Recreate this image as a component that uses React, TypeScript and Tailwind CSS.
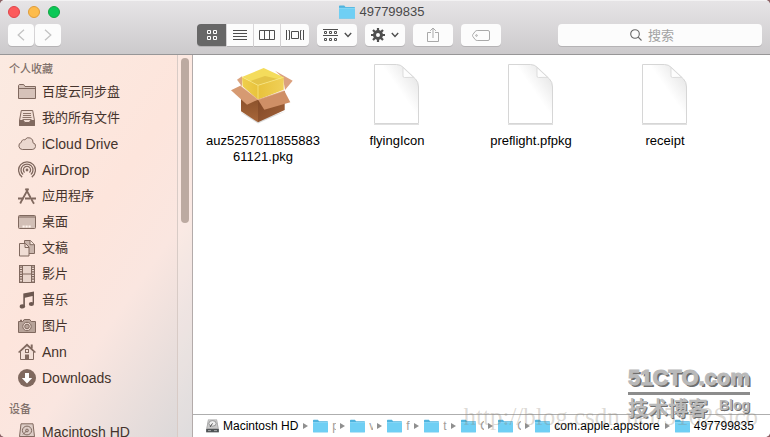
import type { ReactNode } from "react";
import clsx from "clsx";

/* ── Data ──────────────────────────────────────────────────────────────── */

interface Place {
  label: string;
  icon: ReactNode;
}

interface Crumb {
  label: string;
  kind: "disk" | "folder";
  clipped?: boolean;
}

const CRUMBS: Crumb[] = [
  { label: "Macintosh HD", kind: "disk" },
  { label: "p", kind: "folder", clipped: true },
  { label: "v", kind: "folder", clipped: true },
  { label: "f", kind: "folder", clipped: true },
  { label: "t", kind: "folder", clipped: true },
  { label: "C", kind: "folder", clipped: true },
  { label: "C", kind: "folder", clipped: true },
  { label: "com.apple.appstore", kind: "folder" },
  { label: "497799835", kind: "folder" },
];

const FILES = [
  { name: "auz525701185588361121.pkg", kind: "package" },
  { name: "flyingIcon", kind: "document" },
  { name: "preflight.pfpkg", kind: "document" },
  { name: "receipt", kind: "document" },
];

/* ── Sidebar icons ─────────────────────────────────────────────────────── */

function SideIcon({ children }: { children: ReactNode }) {
  return (
    <svg viewBox="0 0 18 18" className="h-[18px] w-[18px] shrink-0" fill="none" stroke="#80695f" strokeWidth="1" aria-hidden="true">
      {children}
    </svg>
  );
}

const FAVORITES: Place[] = [
  {
    label: "百度云同步盘",
    icon: (
      <SideIcon>
        <path d="M.5 15.5v-13l.8-1h4.4l1.3 2h10.5v12z" fill="#d6c2b9" />
        <path d="M.5 5.5h17" />
      </SideIcon>
    ),
  },
  {
    label: "我的所有文件",
    icon: (
      <SideIcon>
        <path d="M3.3 1.5h11.4l1.8 10v5h-15v-5z" fill="#efdcd3" />
        <path d="M1.5 11.5h4l1.2 2h4.6l1.2-2h4v5h-15z" fill="#80695f" />
        <path d="M5 4.5h8M5 6.5h8M4.5 8.5h9M4.5 10.5h9" strokeWidth=".9" />
      </SideIcon>
    ),
  },
  {
    label: "iCloud Drive",
    icon: (
      <SideIcon>
        <path d="M4.3 14.5a3.7 3.7 0 0 1-.9-7.2 2.6 2.6 0 0 1 3.5-2.5 4.4 4.4 0 0 1 8.1 3 3.4 3.4 0 0 1-.8 6.7z" fill="#ead7ce" />
      </SideIcon>
    ),
  },
  {
    label: "AirDrop",
    icon: (
      <SideIcon>
        <g strokeWidth="1.3">
          <path d="M4.2 16.1a8.4 8.4 0 1 1 9.6 0" />
          <path d="M5.1 13.6a6 6 0 1 1 7.8 0" />
          <path d="M6.6 11.6a3.6 3.6 0 1 1 4.8 0" />
        </g>
        <circle cx="9" cy="9" r="1.4" fill="#80695f" stroke="none" />
      </SideIcon>
    ),
  },
  {
    label: "应用程序",
    icon: (
      <SideIcon>
        <path d="M7.6 1.5l7.2 13.3 1.2 2M10.4 1.5L3.2 14.5l-1 2" strokeWidth="1.8" />
        <path d="M0 11.5h5.5M7 11.5h5M14 11.5h4" strokeWidth="1.8" />
      </SideIcon>
    ),
  },
  {
    label: "桌面",
    icon: (
      <SideIcon>
        <rect x=".5" y="2.5" width="17" height="13" rx="1" fill="#d2bfb6" />
        <path d="M1 4h16" />
        <path d="M4.5 13.5h9" stroke="#fff3ec" strokeWidth="2" strokeDasharray="2.2 .8" />
      </SideIcon>
    ),
  },
  {
    label: "文稿",
    icon: (
      <SideIcon>
        <path d="M6.5 1.5h6l4 4v9h-10z" fill="#c9b5ac" />
        <path d="M12 1.5v4.2h4.5" fill="#f7e6dd" />
        <path d="M1.5 4.5h6l3.5 3.5v9h-9.5z" fill="#f0ddd4" />
        <path d="M7 4.5v4h4" />
      </SideIcon>
    ),
  },
  {
    label: "影片",
    icon: (
      <SideIcon>
        <rect x="1.5" y=".5" width="15" height="17" fill="#e8d5cc" />
        <path d="M4.5 .5v17M13.5 .5v17M4.5 9h9" />
        <path d="M3 1.5v15M15 1.5v15" strokeWidth="2" strokeDasharray="1.2 1.2" />
      </SideIcon>
    ),
  },
  {
    label: "音乐",
    icon: (
      <SideIcon>
        <g fill="#6d5850" stroke="none">
          <path d="M5.3 2.6L16 .4v12.2h-1.4V5.1L6.9 6.8v8.4H5.3z" />
          <ellipse cx="4.4" cy="15.4" rx="2.7" ry="2.1" />
          <ellipse cx="13.4" cy="12.9" rx="2.6" ry="2" />
        </g>
      </SideIcon>
    ),
  },
  {
    label: "图片",
    icon: (
      <SideIcon>
        <path d="M.5 4.5h4.3l1.4-2h5.6l1.4 2h4.3v11H.5z" fill="#b7a399" />
        <circle cx="9" cy="9.5" r="4.2" fill="#efdcd3" />
        <circle cx="9" cy="9.5" r="2.3" fill="#b7a399" />
        <path d="M2 3.5h2" strokeWidth="1.5" />
      </SideIcon>
    ),
  },
  {
    label: "Ann",
    icon: (
      <SideIcon>
        <path d="M2.5 8.5v8h13v-8L9 2.5z" fill="#f3e0d8" />
        <path d="M.6 9.5L9 1.6l8.4 7.9" strokeWidth="1.6" />
        <path d="M13.7 1.5v4" strokeWidth="2" />
        <rect x="7.5" y="6.5" width="3" height="3" />
        <path d="M7 17v-5.5h4V17z" fill="#80695f" stroke="none" />
      </SideIcon>
    ),
  },
  {
    label: "Downloads",
    icon: (
      <SideIcon>
        <circle cx="9" cy="9" r="9" fill="#80695f" stroke="none" />
        <path d="M7 4h4v5h3.2L9 14.4 3.8 9H7z" fill="#fff" stroke="none" />
      </SideIcon>
    ),
  },
];

const DEVICES: Place[] = [
  {
    label: "Macintosh HD",
    icon: (
      <SideIcon>
        <path d="M3 .8h12l1.5 12.7v4h-15v-4z" fill="#ddcdc7" />
        <path d="M1.5 13.5h15" />
        <ellipse cx="9" cy="7.5" rx="4.6" ry="4.4" />
        <circle cx="9" cy="7.5" r="1.4" />
        <path d="M9 7.5L5 11.5" />
      </SideIcon>
    ),
  },
];

/* ── Coloured icons ────────────────────────────────────────────────────── */

function FolderIcon({ className }: { className: string }) {
  return (
    <svg viewBox="0 0 16 14" className={clsx("shrink-0", className)} aria-hidden="true">
      <path d="M0 1.2Q0 .4.8.4h4.4l1.3 1.5h8.7q.8 0 .8.8V13.6H0z" fill="#50b4de" />
      <path d="M0 3.3h16v9.5q0 .8-.8.8H.8Q0 13.6 0 12.8z" fill="#6fcff4" />
      <path d="M0 3.3h16" stroke="#93def9" strokeWidth=".8" />
    </svg>
  );
}

function DiskIcon() {
  return (
    <svg viewBox="0 0 13 14" className="h-3.5 w-[13px] shrink-0" aria-hidden="true">
      <path d="M2 .5h9l1.8 9.5v3.2H.2V10z" fill="#a3a3a3" />
      <path d="M2.4 1h8.2l1.2 8.2H1.2z" fill="#c9c9c9" />
      <ellipse cx="6.5" cy="4.4" rx="3.6" ry="2.8" fill="#eee" stroke="#777" strokeWidth=".7" />
      <path d="M6.5 4.4L4 8" stroke="#555" />
      <path d="M.2 10h12.6v3.2H.2z" fill="#4f5355" />
      <path d="M2 11.6h3M8 11.6h3" stroke="#bbb" strokeWidth=".8" />
    </svg>
  );
}

function PackageIcon() {
  return (
    <svg viewBox="1 0 64 62" className="h-[62px] w-16" aria-hidden="true">
      <defs>
        <linearGradient id="box-left" x1="0" y1="0" x2="0" y2="1">
          <stop offset="0" stopColor="#7c4624" />
          <stop offset="1" stopColor="#a8673a" />
        </linearGradient>
        <linearGradient id="box-right" x1="0" y1="0" x2="1" y2="1">
          <stop offset="0" stopColor="#7d4523" />
          <stop offset="1" stopColor="#a2623a" />
        </linearGradient>
        <linearGradient id="foam" x1="0" y1="0" x2="1" y2="0">
          <stop offset="0" stopColor="#efcf4c" />
          <stop offset=".4" stopColor="#e8c23c" />
          <stop offset="1" stopColor="#f0d058" />
        </linearGradient>
      </defs>
      <path d="M10 49l18 11.6L56 48l-27 9z" fill="#000" opacity=".15" />
      {/* back flaps */}
      <path d="M12 13.3L7 16.7 12 23.4z" fill="#dba47f" />
      <path d="M45 7.7l17.7 10L55 27l-2-12z" fill="#dba17f" />
      {/* box body */}
      <path d="M11 24v24.3l17 11V36.7z" fill="url(#box-left)" />
      <path d="M28 36.7v22.6L54.7 47V28z" fill="url(#box-right)" />
      {/* wrapped contents */}
      <path d="M12 14l16 8.3 25.7-8v12.4L28 36.7 12.5 23.3z" fill="url(#foam)" />
      <path d="M12 14L33.7 5l20 9.3-25.7 8z" fill="#f4dc5c" />
      <path d="M20 18.2L35 13l13 3-20 6.3z" fill="#d9b43a" opacity=".6" />
      <path d="M12 14l16 8.3 25.7-8M28 22.3v14" stroke="#f8e582" strokeWidth=".8" fill="none" />
      {/* front flaps */}
      <path d="M10.3 22.7L1 27.3l16 14.4 11-5z" fill="#d69a72" />
      <path d="M54.3 27.7L28 36.7l6.3 10 26-7.4z" fill="#cf8f66" />
      <path d="M10.3 22.7l17.7 14 26.3-9" stroke="#e8b592" strokeWidth=".7" fill="none" />
    </svg>
  );
}

function DocumentIcon() {
  return (
    <svg viewBox="1 0 64 62" className="h-[62px] w-16" aria-hidden="true">
      <defs>
        <linearGradient id="page" x1="1" y1="0" x2=".55" y2=".42">
          <stop offset=".3" stopColor="#e8e8e8" />
          <stop offset="1" stopColor="#fff" />
        </linearGradient>
      </defs>
      <path d="M10 61.5h45" stroke="#ccc" opacity=".6" />
      <path d="M10.5 1.5h22q4 0 7 3l12 11.5q3 3 3 8v36.5h-44z" fill="url(#page)" stroke="#d6d6d6" />
      <path d="M39 4.5v8.5q0 1.5 1.5 1.5l9-.2z" fill="#fdfdfd" stroke="#d6d6d6" strokeWidth=".8" />
    </svg>
  );
}

/* ── Toolbar ───────────────────────────────────────────────────────────── */

const BUTTON = "flex h-[22px] items-center justify-center bg-[#fcfcfc] text-[#4e4e4e]";

function Chevron() {
  return (
    <svg viewBox="0 0 8 6" className="h-1.5 w-2" fill="none" stroke="currentColor" strokeWidth="1.4" aria-hidden="true">
      <path d="M.8 1L4 4.4 7.2 1" />
    </svg>
  );
}

function Toolbar() {
  return (
    <header className="flex h-[55px] shrink-0 flex-col border-t border-b border-t-[#f3f2f3] border-b-[#979697] bg-linear-to-b from-[#e6e4e6] to-[#cccacc]">
      <div className="relative flex h-[23px] shrink-0 items-center justify-center pr-1.5 pb-0.5">
        <div className="absolute left-2 flex gap-2">
          <button aria-label="Close" className="size-3 rounded-full border border-[#e0454a] bg-[#fc5b5c]" />
          <button aria-label="Minimize" className="size-3 rounded-full border border-[#e09c3a] bg-[#fdbc4c]" />
          <button aria-label="Zoom" className="size-3 rounded-full border border-[#12a541] bg-[#09c856]" />
        </div>
        <h1 className="flex items-center gap-1 text-[13px] text-[#4a494a]">
          <FolderIcon className="h-3.5 w-4" />
          497799835
        </h1>
      </div>
      <div className="flex items-start px-2">
        <div className="flex gap-px drop-shadow-[0_1px_0_#b5b3b5]">
          <button aria-label="Back" className={clsx(BUTTON, "w-[26px] rounded-[4px]")}>
            <svg viewBox="0 0 8 12" className="h-3 w-2" fill="none" stroke="#c3c3c3" strokeWidth="1.3">
              <path d="M7 .8L1.2 6 7 11.2" />
            </svg>
          </button>
          <button aria-label="Forward" className={clsx(BUTTON, "w-[26px] rounded-[4px]")}>
            <svg viewBox="0 0 8 12" className="h-3 w-2" fill="none" stroke="#c3c3c3" strokeWidth="1.3">
              <path d="M1 .8L6.8 6 1 11.2" />
            </svg>
          </button>
        </div>

        <div className="ml-[136px] flex gap-px drop-shadow-[0_1px_0_#b5b3b5]">
          <button aria-label="Icon view" className="flex h-[22px] w-[29px] items-center justify-center rounded-l-[4px] bg-[#676767] text-white">
            <svg viewBox="0 0 10 10" className="size-2.5" fill="none" stroke="currentColor">
              <path d="M.5 .5h3v3h-3zM6.5 .5h3v3h-3zM.5 6.5h3v3h-3zM6.5 6.5h3v3h-3z" />
            </svg>
          </button>
          <button aria-label="List view" className={clsx(BUTTON, "w-[26px]")}>
            <svg viewBox="0 0 14 11" className="h-[11px] w-3.5" stroke="currentColor">
              <path d="M0 .5h14M0 3.5h14M0 6.5h14M0 9.5h14" />
            </svg>
          </button>
          <button aria-label="Column view" className={clsx(BUTTON, "w-[26px]")}>
            <svg viewBox="0 0 16 10" className="h-2.5 w-4" fill="none" stroke="currentColor">
              <path d="M.5 .5h15v9H.5zM5.5 .5v9M10.5 .5v9" />
            </svg>
          </button>
          <button aria-label="Cover flow" className={clsx(BUTTON, "w-7 rounded-r-[4px]")}>
            <svg viewBox="0 0 18 10" className="h-2.5 w-[18px]" fill="none" stroke="currentColor">
              <path d="M.5 0v10M3.5 .5v9M2.5 .5h1M2.5 9.5h1M5.5 1.5h7v7h-7zM14.5 .5v9M14.5 .5h1M14.5 9.5h1M17.5 0v10" />
            </svg>
          </button>
        </div>

        <div className="ml-2 flex gap-2 drop-shadow-[0_1px_0_#b5b3b5]">
          <button aria-label="Arrange" className={clsx(BUTTON, "w-10 gap-1.5 rounded-[4px]")}>
            <svg viewBox="0 0 15 13" className="h-[13px] w-[15px]" fill="none" stroke="currentColor">
              <path d="M0 .5h15M0 6.5h15" />
              <path d="M1.5 2.5h2v2h-2zM6.5 2.5h2v2h-2zM11.5 2.5h2v2h-2zM1.5 9.5h2v2h-2zM6.5 9.5h2v2h-2zM11.5 9.5h2v2h-2z" />
            </svg>
            <Chevron />
          </button>
          <button aria-label="Action" className={clsx(BUTTON, "w-10 gap-1.5 rounded-[4px]")}>
            <svg viewBox="0 0 14 14" className="size-3.5" fill="none" stroke="currentColor">
              <circle cx="7" cy="7" r="3.5" strokeWidth="3" />
              <path d="M7 0v3M7 11v3M0 7h3M11 7h3M2 2l2.2 2.2M9.8 9.8L12 12M2 12l2.2-2.2M9.8 4.2L12 2" strokeWidth="2.2" />
            </svg>
            <Chevron />
          </button>
          <button aria-label="Share" className={clsx(BUTTON, "w-10 rounded-[4px]")}>
            <svg viewBox="0 0 12 16" className="h-4 w-3" fill="none" stroke="#a9a9a9">
              <path d="M4 5.5H.5v9h11v-9H8M6 11V1M3.2 3.8L6 1l2.8 2.8" />
            </svg>
          </button>
          <button aria-label="Tags" className={clsx(BUTTON, "w-10 rounded-[4px]")}>
            <svg viewBox="0 0 18 11" className="h-[11px] w-[18px]" fill="none" stroke="#a9a9a9">
              <path d="M5.2 .5H16q1.5 0 1.5 1.5v7q0 1.5-1.5 1.5H5.2Q4 10.5 3.2 9.6L.8 6.4Q.2 5.5.8 4.6l2.4-3.2Q4 .5 5.2 .5z" />
              <circle cx="4.5" cy="5.5" r=".8" />
            </svg>
          </button>
        </div>

        <label className="ml-auto flex h-[22px] w-[204px] cursor-text items-center justify-center gap-1.5 rounded-[4px] bg-[#fcfcfc] pr-4 shadow-[0_1px_0_#b5b3b5]">
          <svg viewBox="0 0 12 12" className="size-3" fill="none" stroke="#666" strokeWidth="1.1" aria-hidden="true">
            <circle cx="5" cy="5" r="4.3" />
            <path d="M8.2 8.2l3.3 3.3" />
          </svg>
          <input
            type="search"
            aria-label="搜索"
            placeholder="搜索"
            className="[field-sizing:content] text-[13px] leading-5 outline-none placeholder:text-[#a2a2a2]"
          />
        </label>
      </div>
    </header>
  );
}

/* ── Sidebar ───────────────────────────────────────────────────────────── */

function PlaceList({ title, places }: { title: string; places: Place[] }) {
  return (
    <section>
      <h2 className="flex h-6 items-center pt-1 pl-[9px] text-[11px] font-medium text-[#80706a]">{title}</h2>
      <ul>
        {places.map((place) => (
          <li key={place.label}>
            <a
              href="#"
              className={clsx(
                "flex h-[26px] items-center gap-1.5 pl-[18px] text-[#44332c]",
                /^[A-Za-z]/.test(place.label) ? "text-[14px]" : "text-[13px]",
              )}
            >
              {place.icon}
              {place.label}
            </a>
          </li>
        ))}
      </ul>
    </section>
  );
}

function Sidebar() {
  return (
    <aside className="flex w-[193px] shrink-0 overflow-hidden border-r border-[#b3abaa] bg-[linear-gradient(125deg,#fbeae1_0%,#fde5dc_45%,#fae6e0_65%,#d9d7d8_100%)]">
      <nav className="flex flex-1 flex-col gap-1">
        <PlaceList title="个人收藏" places={FAVORITES} />
        <PlaceList title="设备" places={DEVICES} />
      </nav>
      <div className="w-[15px] border-l border-[#d8cbc6] bg-white/15 px-[3px] pt-[3px]">
        <div className="h-[165px] w-2 rounded-full bg-[#bcaaa1]" />
      </div>
    </aside>
  );
}

/* ── Path bar ──────────────────────────────────────────────────────────── */

function PathBar() {
  return (
    <footer className="h-[23px] shrink-0 border-t border-[#aeaeae] bg-white">
      <ol className="flex h-[22px] items-center gap-[5px] pl-[13px] text-[12px] text-black">
        {CRUMBS.map((crumb, i) => (
          <li key={i} className="flex items-center gap-1">
            {crumb.kind === "disk" ? <DiskIcon /> : <FolderIcon className="h-3.5 w-[15px]" />}
            <span className={clsx("whitespace-nowrap", crumb.clipped ? "w-1 overflow-hidden text-[#a39d98]" : "pr-px")}>
              {crumb.label}
            </span>
            {i < CRUMBS.length - 1 && (
              <svg viewBox="0 0 5 6" className="h-1.5 w-[5px]" fill="#8f8f8f" aria-hidden="true">
                <path d="M0 0l5 3-5 3z" />
              </svg>
            )}
          </li>
        ))}
      </ol>
    </footer>
  );
}

/* ── Window ────────────────────────────────────────────────────────────── */

export default function App() {
  return (
    <div className="h-screen bg-[#8d6266] font-['Liberation_Sans','Noto_Sans_CJK_SC',sans-serif]">
      <div className="relative flex h-full flex-col overflow-hidden rounded-[5px] bg-white">
        <Toolbar />
        <div className="flex min-h-0 flex-1">
          <Sidebar />
          <main className="flex min-w-0 flex-1 flex-col">
            <ul className="flex min-h-0 flex-1 flex-wrap content-start pt-2 pl-[3px]">
              {FILES.map((file) => (
                <li key={file.name} className="flex w-[134px] flex-col items-center gap-2">
                  {file.kind === "package" ? <PackageIcon /> : <DocumentIcon />}
                  <span className="w-[118px] text-center text-[13px] leading-4 break-all text-black">{file.name}</span>
                </li>
              ))}
            </ul>
            <PathBar />
          </main>
        </div>

        {/* Blog watermarks */}
        <div className="pointer-events-none absolute right-3 bottom-1.5 font-['Liberation_Serif',serif] text-[25px] leading-7 whitespace-nowrap text-[#8a8070]/30">
          http://blog.csdn.net/5162Sico
        </div>
        <div className="pointer-events-none absolute right-5 bottom-[14px] w-[122px] text-[#b9b9b9] [text-shadow:2px_2px_0_#6e6e6e]">
          <div className="border-b-3 border-[#8c8c8c] text-[22px] leading-7 font-bold whitespace-nowrap [-webkit-text-stroke:1px_#b9b9b9]">
            51CTO.com
          </div>
          <div className="flex items-start justify-between font-bold [text-shadow:1px_1px_0_#6e6e6e]">
            <span className="text-[20px] leading-7">技术博客</span>
            <span className="text-[14px] leading-5">Blog</span>
          </div>
        </div>
      </div>
    </div>
  );
}
